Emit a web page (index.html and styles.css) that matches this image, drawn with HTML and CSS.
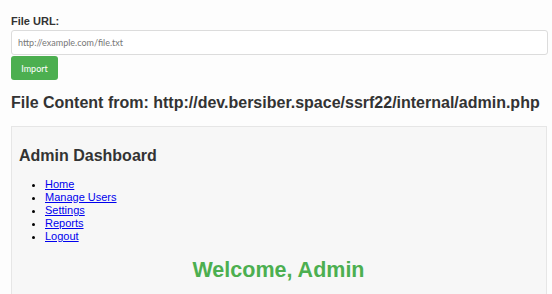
FILE: index.html
```html
<!DOCTYPE html>
<html>
<head>
<meta charset="utf-8">
<link rel="stylesheet" href="styles.css">
</head>
<body>
<div class="page">
  <form class="fetch-form">
    <label class="field-label" for="url">File URL:</label>
    <input class="url-input" id="url" type="text" placeholder="http://example.com/file.txt">
    <button class="btn-import" type="button">Import</button>
  </form>
  <h2 class="content-title">File Content from: http://dev.bersiber.space/ssrf22/internal/admin.php</h2>
  <div class="content-box">
    <h3 class="dash-title">Admin Dashboard</h3>
    <ul class="nav-list">
      <li><a href="#">Home</a></li>
      <li><a href="#">Manage Users</a></li>
      <li><a href="#">Settings</a></li>
      <li><a href="#">Reports</a></li>
      <li><a href="#">Logout</a></li>
    </ul>
    <h1 class="welcome">Welcome, Admin</h1>
  </div>
</div>
</body>
</html>
```
FILE: styles.css
```css
html, body {
  margin: 0;
  padding: 0;
  background: #fdfdfd;
  font-family: "Liberation Sans", Arial, sans-serif;
  color: #333;
}
.page {
  padding: 15px 4px 0 11px;
}
.fetch-form {
  display: flex;
  flex-direction: column;
  align-items: flex-start;
}
.field-label {
  display: block;
  font-size: 11px;
  line-height: 13px;
  font-weight: bold;
  color: #333;
  margin-bottom: 2px;
}
.url-input {
  box-sizing: border-box;
  width: 537px;
  height: 25px;
  margin: 0;
  padding: 0 6px;
  border: 1px solid #dcdcdc;
  border-radius: 3px;
  background: #fff;
  font-family: Lato, "Open Sans", sans-serif;
  font-size: 9px;
  color: #555;
}
.url-input::placeholder {
  color: #777;
}
.btn-import {
  box-sizing: border-box;
  width: 47px;
  height: 24px;
  margin: 1px 0 0 0;
  padding: 0;
  border: none;
  border-radius: 3px;
  background: #4caf50;
  color: #fff;
  font-family: Lato, "Open Sans", sans-serif;
  font-size: 9px;
}
.content-title {
  margin: 14px 0 14px 0;
  font-size: 16px;
  line-height: 18px;
  font-weight: bold;
  color: #333;
}
.content-box {
  box-sizing: border-box;
  width: 536px;
  height: 200px;
  border: 1px solid #e6e6e6;
  background: #f7f7f7;
  padding: 8px 8px 8px 7px;
}
.dash-title {
  margin: 11px 0 13px 0;
  font-size: 16px;
  line-height: 19px;
  font-weight: bold;
  color: #333;
}
.nav-list {
  margin: 0;
  padding-left: 26px;
  font-size: 11px;
  line-height: 13px;
  color: #000;
}
.nav-list a {
  color: #0000ee;
}
.welcome {
  margin: 15px 0 0 0;
  text-align: center;
  font-size: 21.5px;
  line-height: 24px;
  font-weight: bold;
  color: #4caf50;
}
```
